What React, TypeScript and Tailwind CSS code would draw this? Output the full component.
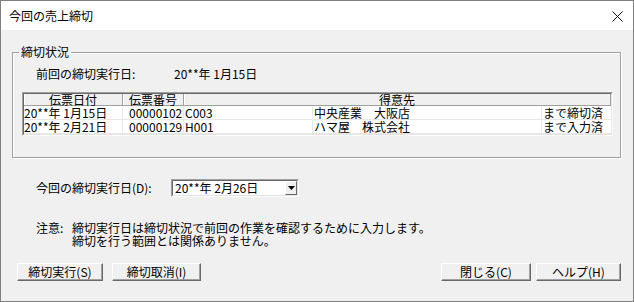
import React from "react";

const cellSep = "border-r border-[#e8e8e8]";

function Btn({ label, w }: { label: string; w: string }) {
  return (
    <div
      className={`${w} h-[18px] bg-[#f0f0f0] border-t border-l border-white border-r border-b border-r-[#696969] border-b-[#696969] shadow-[inset_-1px_-1px_0_#a0a0a0] flex items-center justify-center text-[12px] leading-[12px] text-black`}
    >
      {label}
    </div>
  );
}

export default function App() {
  const rows = [
    ["20**年 1月15日", "00000102", "C003", "中央産業　大阪店", "まで締切済"],
    ["20**年 2月21日", "00000129", "H001", "ハマ屋　株式会社", "まで入力済"],
  ];
  return (
    <div className="w-[634px] h-[302px] bg-[#f0f0f0] border border-[#808080] flex flex-col font-['Noto_Sans_CJK_JP',sans-serif] text-[12px] leading-[12px] text-black overflow-hidden">
      {/* title bar */}
      <div className="h-[29px] bg-white flex items-center justify-between pl-[8px] pr-[10px] shrink-0">
        <span className="text-[12px] leading-[14px]">今回の売上締切</span>
        <svg width="11" height="11" viewBox="0 0 11 11" className="mt-[1px]">
          <path d="M0.5 0.5 L10.5 10.5 M10.5 0.5 L0.5 10.5" stroke="#111" strokeWidth="1" />
        </svg>
      </div>

      {/* body */}
      <div className="flex flex-col pl-[11px]">
        {/* group box */}
        <div className="relative mt-[22px] w-[609px] h-[106px] border border-[#a0a0a0] shadow-[inset_1px_1px_0_#fff,1px_1px_0_#fff] flex flex-col">
          <div className="absolute left-[6px] top-[-8px] bg-[#f0f0f0] px-[2px] leading-[14px]">締切状況</div>
          <div className="flex mt-[14px] pl-[23px] leading-[14px]">
            <span className="w-[138px]">前回の締切実行日:</span>
            <span>20**年 1月15日</span>
          </div>
          {/* list view */}
          <div className="ml-[9px] mt-[11px] w-[591px] border border-t-[#a0a0a0] border-l-[#a0a0a0] border-r-white border-b-white">
            <div className="border border-t-[#696969] border-l-[#696969] border-r-[#e3e3e3] border-b-[#e3e3e3] bg-white">
              <div className="flex h-[12px] bg-[#f0f0f0]">
                <div className="w-[99px] flex items-center justify-center border-r border-b border-[#a0a0a0] shadow-[inset_1px_0_0_#fff]">伝票日付</div>
                <div className="w-[61px] flex items-center justify-center border-r border-b border-[#a0a0a0] shadow-[inset_1px_0_0_#fff]">伝票番号</div>
                <div className="flex-1 flex items-center justify-center border-r border-b border-[#a0a0a0] shadow-[inset_1px_0_0_#fff]">得意先</div>
              </div>
              {rows.map((r, i) => (
                <div key={i} className="flex h-[14px] border-b border-[#e8e8e8]">
                  <div className={`w-[99px] pl-[0px] flex items-center ${cellSep}`}>{r[0]}</div>
                  <div className={`w-[61px] pl-[6px] flex items-center ${cellSep}`}>{r[1]}</div>
                  <div className={`w-[129px] pl-[1px] flex items-center ${cellSep}`}>{r[2]}</div>
                  <div className={`w-[229px] pl-[1px] flex items-center ${cellSep}`}>{r[3]}</div>
                  <div className="flex-1 pl-[1px] flex items-center">{r[4]}</div>
                </div>
              ))}
            </div>
          </div>
        </div>

        {/* combo row */}
        <div className="flex items-center mt-[21px] h-[18px]">
          <span className="ml-[24px] w-[135px]">今回の締切実行日(D):</span>
          <div className="w-[128px] h-[18px] border border-t-[#a0a0a0] border-l-[#a0a0a0] border-r-white border-b-white">
            <div className="h-full border border-t-[#696969] border-l-[#696969] border-r-[#e3e3e3] border-b-[#e3e3e3] bg-white flex items-center justify-between pl-[2px]">
              <span>20**年 2月26日</span>
              <div className="w-[12px] h-[14px] bg-[#f0f0f0] border-t border-l border-white border-r border-b border-r-[#696969] border-b-[#696969] flex items-center justify-center">
                <svg width="7" height="4" viewBox="0 0 7 4">
                  <path d="M0 0 H7 L3.5 4 Z" fill="#000" />
                </svg>
              </div>
            </div>
          </div>
        </div>

        {/* note */}
        <div className="flex mt-[24px] ml-[24px] leading-[13px]">
          <span className="w-[36px]">注意:</span>
          <div className="flex flex-col">
            <span>締切実行日は締切状況で前回の作業を確認するために入力します。</span>
            <span>締切を行う範囲とは関係ありません。</span>
          </div>
        </div>

        {/* buttons */}
        <div className="flex mt-[16px] ml-[5px] w-[604px] justify-between">
          <div className="flex gap-[9px]">
            <Btn label="締切実行(S)" w="w-[86px]" />
            <Btn label="締切取消(I)" w="w-[89px]" />
          </div>
          <div className="flex gap-[5px]">
            <Btn label="閉じる(C)" w="w-[90px]" />
            <Btn label="ヘルプ(H)" w="w-[85px]" />
          </div>
        </div>
      </div>
    </div>
  );
}
